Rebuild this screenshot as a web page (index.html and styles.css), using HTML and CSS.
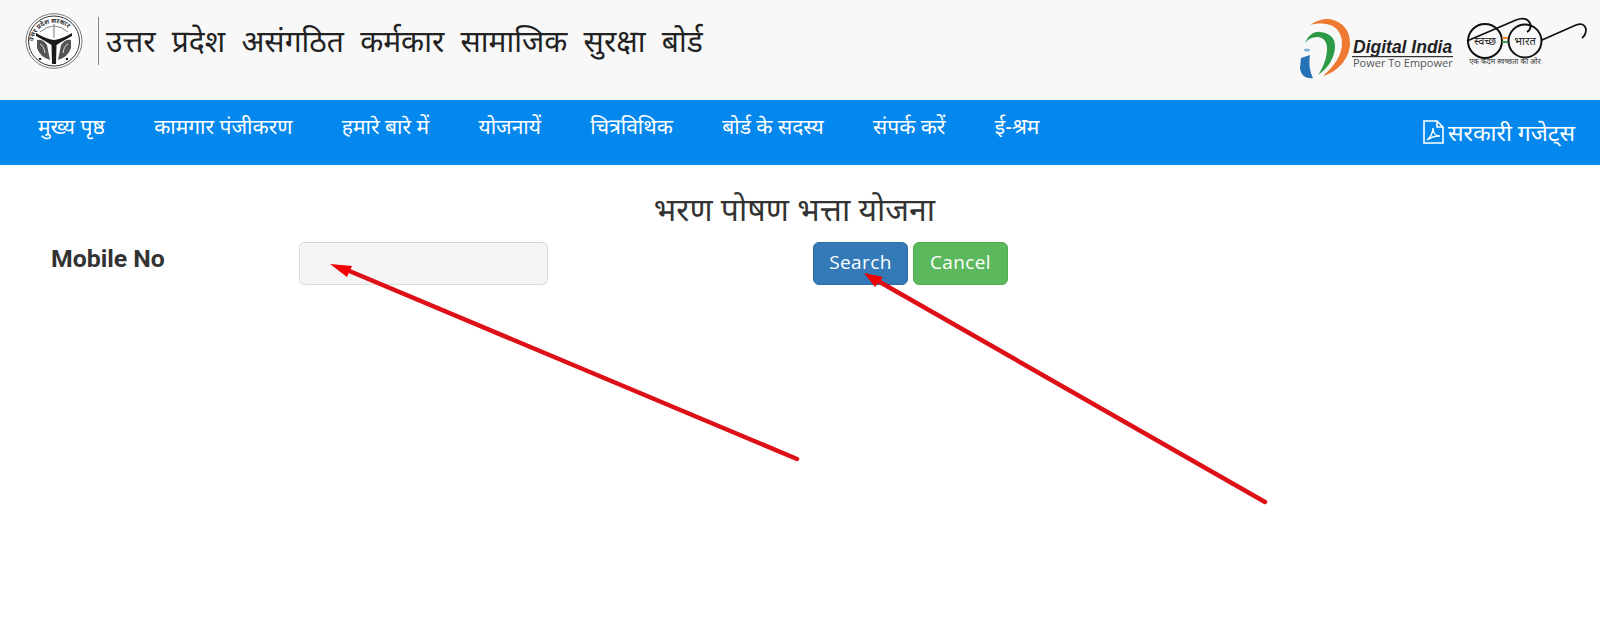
FILE: index.html

```html
<!DOCTYPE html>
<html>
	<head>
		<title>भरण पोषण भत्ता योजना</title>
		<meta charset="UTF-8">
		<link rel="stylesheet" href="styles.css">
	</head>
	<body>
		<div id="header">
			<div class="brand">
				<svg class="emblem" width="58" height="56" viewBox="0 0 58 56">
					<defs>
						<path id="ring" d="M8 31 A21 21 0 0 1 50 31"/>
					</defs>
					<ellipse cx="29" cy="28" rx="28" ry="27.300" fill="#fff" stroke="#777" stroke-width="1"/>
					<ellipse cx="29" cy="28" rx="25.500" ry="25" fill="none" stroke="#333" stroke-width="1"/>
					<text class="em-ring"><textPath href="#ring" startOffset="4%">उत्तर प्रदेश सरकार</textPath></text>
					<path d="M29 11 V25" stroke="#777" stroke-width="1"/>
					<path d="M15 19 Q22 13 29 13 Q36 13 43 19" fill="none" stroke="#888" stroke-width="1"/>
					<path d="M11 20 Q21 26 29 27 Q37 26 47 20 L47 23 Q36 29 31.500 32 L31 51 H27 L26.500 32 Q22 29 11 23 Z" fill="#1a1a1a"/>
					<path d="M12 27 Q18 26 22 32 L25 47 Q15 44 12 35 Z M46 27 Q40 26 36 32 L33 47 Q43 44 46 35 Z" fill="#555"/>
					<path d="M15 31 Q19 33 20 40 M43 31 Q39 33 38 40" fill="none" stroke="#ddd" stroke-width="1"/>
					<circle cx="15" cy="46" r="1.300" fill="#222"/>
					<circle cx="42" cy="46" r="1.300" fill="#222"/>
				</svg>
				<div class="brand-line"></div>
				<h1>उत्तर प्रदेश असंगठित कर्मकार सामाजिक सुरक्षा बोर्ड</h1>
			</div>
			<div class="logos">
				<svg class="digital" width="156" height="62" viewBox="0 -1 156 62">
					<path d="M10 5 Q20 -2 30 -1 C44 2 50 12 50 23 C50 38 38 52 23 56 C34 46 42 36 42 23 C42 14 37 7 30 5 C24 3 16 3 10 5 Z" fill="#ee7a32"/>
					<path d="M5 23 C9 14 15 11 20 12 C30 13 35 18 35 26 C35 38 28 48 18 55 C24 46 27 37 27 28 C27 21 23 17 17 17 C12 17 8 19 5 23 Z" fill="#2d9a48"/>
					<path d="M1 38 L10 35 C9 42 9 50 13 58 C6 59 1 56 0 48 Z" fill="#2472b5"/>
					<ellipse cx="7" cy="30" rx="3" ry="1.500" fill="#7fb2d8"/>
					<text x="53" y="33" class="di-name">Digital India</text>
					<rect x="52" y="36" width="101" height="1.200" fill="#333"/>
					<text x="53" y="47" class="di-tag">Power To Empower</text>
				</svg>
				<svg class="swachh" width="126" height="60" viewBox="0 0 126 60">
					<circle cx="19" cy="24" r="17" fill="none" stroke="#111" stroke-width="2"/>
					<circle cx="59" cy="24" r="16.500" fill="none" stroke="#111" stroke-width="2"/>
					<path d="M1 24 L50 3 Q60 -1 64 6 Q66 12 61 15" fill="none" stroke="#111" stroke-width="1.800"/>
					<path d="M76 23 L110 8 Q118 5 120 12 Q120 18 116 21" fill="none" stroke="#111" stroke-width="1.800"/>
					<rect x="36" y="20" width="6" height="2" fill="#ee8a32"/>
					<rect x="36" y="24" width="6" height="2" fill="#3a9a48"/>
					<text x="19" y="28" class="sw-word" text-anchor="middle">स्वच्छ</text>
					<text x="59" y="28" class="sw-word" text-anchor="middle">भारत</text>
					<text x="39" y="47" class="sw-tag" text-anchor="middle">एक कदम स्वच्छता की ओर</text>
				</svg>
			</div>
		</div>
		<div id="nav">
			<div class="nav-links">
				<a href="#">मुख्य पृष्ठ</a>
				<a href="#">कामगार पंजीकरण</a>
				<a href="#">हमारे बारे में</a>
				<a href="#">योजनायें</a>
				<a href="#">चित्रविथिक</a>
				<a href="#">बोर्ड के सदस्य</a>
				<a href="#">संपर्क करें</a>
				<a href="#">ई-श्रम</a>
			</div>
			<a href="#" class="gazette">
				<svg width="21" height="24" viewBox="0 0 21 24">
					<path d="M1 1 H14 L20 7 V23 H1 Z M14 1 V7 H20" fill="none" stroke="#fff" stroke-width="1.600"/>
					<path d="M4 20 C7 18 10 13 10 8 C10 13 13 16 17 16 C13 16 8 17 4 20 Z" fill="none" stroke="#fff" stroke-width="1.300"/>
				</svg>
				<span>सरकारी गजेट्स</span>
			</a>
		</div>
		<div id="main">
			<h2>भरण पोषण भत्ता योजना</h2>
			<div class="search-row">
				<label for="mobile">Mobile No</label>
				<input type="text" id="mobile" />
				<div class="buttons">
					<button class="btn-search">Search</button>
					<button class="btn-cancel">Cancel</button>
				</div>
			</div>
		</div>
		<!-- arrows drawn over the page -->
		<svg class="arrows" width="1600" height="644" viewBox="0 0 1600 644">
			<path d="M797 459 L347 270" class="arrow-line"/>
			<path d="M330 264 L352 266 L347 277 Z" class="arrow-head"/>
			<path d="M1265 502 L878 281" class="arrow-line"/>
			<path d="M864 273 L883 277 L875 287 Z" class="arrow-head"/>
		</svg>
	</body>
</html>
```

FILE: styles.css

```css
/* common */
html, body {
	margin: 0; padding: 0; background-color: white; height: 644px; overflow: hidden;
}
body {
	position: relative; font-family: "Noto Sans", "Liberation Sans", sans-serif; color: #333;
}
/* header */
#header {
	height: 100px; background-color: #f8f8f8; display: flex; justify-content: space-between; padding: 11px 8px 0 25px; box-sizing: border-box;
}
.brand {
	display: flex; align-items: flex-start; height: 60px;
}
.emblem {
	margin-top: 2px;
}
.brand-line {
	width: 1px; height: 48px; background-color: #888; margin: 6px 7px 0 15px;
}
.em-ring {
	font-size: 6.500px; font-weight: bold; fill: #333;
}
h1 {
	margin: 10px 0 0; font-size: 30px; font-weight: normal; word-spacing: 8.500px; color: #222; line-height: 40px; white-space: nowrap;
}
.logos {
	display: flex; align-items: flex-start; gap: 10px; padding-top: 6px;
}
.digital {
	margin-top: 2px;
}
.di-name {
	font-family: "Liberation Sans", sans-serif; font-size: 17.500px; font-weight: bold; font-style: italic; fill: #222;
}
.di-tag {
	font-family: "Open Sans", sans-serif; font-size: 11px; fill: #555;
}
.sw-word {
	font-size: 11px; fill: #222;
}
.sw-tag {
	font-size: 7.500px; fill: #333;
}
/* nav */
#nav {
	height: 65px; background-color: #0488ee; display: flex; justify-content: space-between; padding: 0 25px 0 38px; box-sizing: border-box;
}
.nav-links {
	display: flex; gap: 49.400px;
}
#nav a {
	color: white; text-decoration: none; font-size: 21px; line-height: 52px; white-space: nowrap;
}
#nav .gazette {
	display: flex; align-items: center; gap: 4px; height: 63px; font-size: 23px;
}
/* main */
#main {
	padding: 0 0 0 51px;
}
h2 {
	margin: 21px 0 10px; padding-right: 62px; font-size: 32px; line-height: 46px; font-weight: normal; text-align: center; color: #333;
}
.search-row {
	display: flex; align-items: flex-start;
}
label {
	width: 248px; font-family: Roboto, sans-serif; font-weight: bold; font-size: 24.800px; line-height: 33px; color: #333;
}
input {
	width: 249px; height: 43px; box-sizing: border-box; background-color: #f5f5f5; border: 1px solid #ddd; border-top-color: #d4d4d4; border-radius: 6px;
}
.buttons {
	display: flex; gap: 5px; margin-left: 265px;
}
button {
	height: 43px; border: 1px solid transparent; border-radius: 6px; color: white; font-family: "Open Sans", sans-serif; font-size: 19px; letter-spacing: .4px; padding: 0 0 3px;
}
.btn-search {
	width: 95px; background-color: #337ab7; border-color: #2e6da4;
}
.btn-cancel {
	width: 95px; background-color: #5cb85c; border-color: #4cae4c;
}
/* arrows */
.arrows {
	position: absolute; left: 0; top: 0; pointer-events: none;
}
.arrow-line {
	fill: none; stroke: #dc1016; stroke-width: 4.500px; stroke-linecap: round;
}
.arrow-head {
	fill: #f00000;
}
```
